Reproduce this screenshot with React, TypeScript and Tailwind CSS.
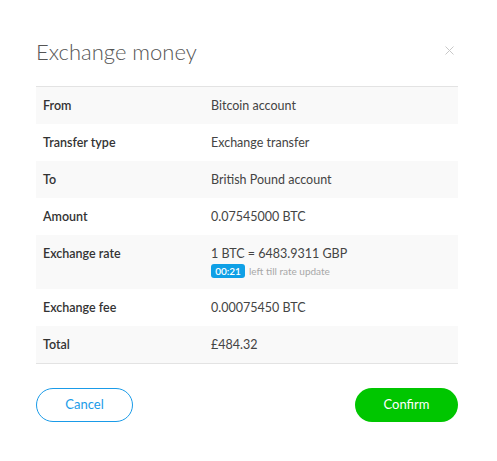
import React from "react";

const rows: { label: string; value: React.ReactNode }[] = [
  { label: "From", value: "Bitcoin account" },
  { label: "Transfer type", value: "Exchange transfer" },
  { label: "To", value: "British Pound account" },
  { label: "Amount", value: "0.07545000 BTC" },
  {
    label: "Exchange rate",
    value: (
      <div className="flex flex-col">
        <span>1 BTC = 6483.9311 GBP</span>
        <div className="mt-[3px] flex items-center">
          <span className="inline-flex h-[14px] w-[34px] items-center justify-center rounded-[3px] bg-[#0fa0e6] text-[10px] font-semibold leading-none text-white">
            00:21
          </span>
          <span className="ml-[4px] text-[10px] leading-none text-[#a8a8a8]">left till rate update</span>
        </div>
      </div>
    ),
  },
  { label: "Exchange fee", value: "0.00075450 BTC" },
  { label: "Total", value: "£484.32" },
];

export default function App() {
  return (
    <div className="min-h-[461px] w-[497px] bg-white text-[#444]" style={{ fontFamily: "Lato, 'Noto Sans', sans-serif" }}>
      <div className="pl-[36px] pr-[39px] pt-[38px]">
        <div className="flex items-start justify-between">
          <h1 className="text-[22px] font-light leading-[28px] text-[#555]">Exchange money</h1>
          <button className="mr-[4px] mt-[8px] text-[#c8c8c8]">
            <svg width="9" height="9" viewBox="0 0 9 9" fill="none" stroke="currentColor" strokeWidth="1">
              <path d="M0.5 0.5 L8.5 8.5 M8.5 0.5 L0.5 8.5" />
            </svg>
          </button>
        </div>
        <div className="mt-[20px] border-y border-[#e3e3e3]">
          {rows.map((r, i) => (
            <div
              key={r.label}
              className={`flex px-[7px] pb-[11px] pt-[11px] text-[12.5px] leading-[15px] ${i % 2 === 0 ? "bg-[#f9f9f9]" : "bg-white"}`}
            >
              <div className="w-[168px] font-semibold text-[#333]">{r.label}</div>
              <div className="text-[#444]">{r.value}</div>
            </div>
          ))}
        </div>
        <div className="mt-[24px] flex items-center justify-between">
          <button className="h-[34px] w-[97px] rounded-full border border-[#1a9be8] text-[13px] text-[#1a9be8]">Cancel</button>
          <button className="h-[34px] w-[103px] rounded-full bg-[#00c600] text-[13px] text-white">Confirm</button>
        </div>
      </div>
    </div>
  );
}
